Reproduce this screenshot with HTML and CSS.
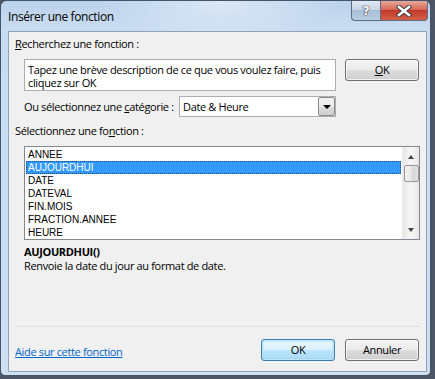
FILE: index.html
```html
<!DOCTYPE html>
<html lang="fr">
  <head>
    <meta charset="UTF-8" />
    <title>Insérer une fonction</title>
    <link rel="stylesheet" href="styles.css">
  </head>
  <body>
    <div class="window">
      <div class="titlebar">
        <div class="title">Insérer une fonction</div>
        <div class="caption-buttons">
          <div class="cap-btn cap-help">?</div>
          <div class="cap-btn cap-close">
            <svg width="16" height="12" viewBox="0 0 16 12">
              <path d="M3 2 L13 10 M13 2 L3 10" stroke="#3b3b3b" stroke-width="4.4" stroke-linecap="square" fill="none" />
              <path d="M3 2 L13 10 M13 2 L3 10" stroke="#ffffff" stroke-width="2.6" stroke-linecap="square" fill="none" />
            </svg>
          </div>
        </div>
      </div>

      <div class="client">
        <div class="label"><u>R</u>echerchez une fonction :</div>

        <div class="search-row">
          <div class="search-box">Tapez une brève description de ce que vous voulez faire, puis cliquez sur OK</div>
          <div class="btn"><u>O</u>K</div>
        </div>

        <div class="category-row">
          <div class="category-label">Ou sélectionnez une <u>c</u>atégorie :</div>
          <div class="select">
            <span class="select-value">Date &amp; Heure</span>
            <span class="select-arrow"><span class="tri-down"></span></span>
          </div>
        </div>

        <div class="label label-list">Sélectionnez une fo<u>n</u>ction :</div>

        <div class="listbox">
          <ul class="items">
            <li>ANNEE</li>
            <li class="selected">AUJOURDHUI</li>
            <li>DATE</li>
            <li>DATEVAL</li>
            <li>FIN.MOIS</li>
            <li>FRACTION.ANNEE</li>
            <li>HEURE</li>
          </ul>
          <div class="scrollbar">
            <span class="arrow-up"></span>
            <span class="thumb"></span>
            <span class="arrow-down"></span>
          </div>
        </div>

        <div class="fn-name">AUJOURDHUI()</div>
        <div class="fn-desc">Renvoie la date du jour au format de date.</div>

        <div class="separator"></div>

        <div class="footer">
          <a class="help-link" href="#">Aide sur cette fonction</a>
          <div class="footer-buttons">
            <div class="btn btn-default">OK</div>
            <div class="btn">Annuler</div>
          </div>
        </div>
      </div>
    </div>
  </body>
</html>
```

FILE: styles.css
```css
* {
  box-sizing: border-box;
}

body {
  margin: 0;
  width: 435px;
  height: 379px;
  overflow: hidden;
  background: #4b5563;
  font-family: "Open Sans", "Noto Sans", sans-serif;
  font-size: 11px;
  letter-spacing: -0.35px;
  color: #000;
}

.window {
  width: 431px;
  height: 376px;
  border: 1px solid #44556a;
  border-radius: 7px 7px 5px 5px;
  background: linear-gradient(to bottom, #bed5ee 0px, #c9dcf0 30px, #cddff1 100%);
  position: relative;
  overflow: hidden;
}

.titlebar {
  height: 30px;
  display: flex;
  align-items: flex-start;
  padding-left: 7px;
  background:
    radial-gradient(ellipse 120px 40px at 220px 0px, rgba(255, 255, 255, 0.45), rgba(255, 255, 255, 0) 100%),
    linear-gradient(to bottom, #bcd3ec, #cadcf0);
}

.title {
  margin-top: 8px;
  font-size: 12px;
  line-height: 16px;
  letter-spacing: -0.4px;
  color: #000;
}

.caption-buttons {
  margin-left: auto;
  margin-right: 2px;
  display: flex;
  height: 20px;
}

.cap-btn {
  height: 20px;
  border: 1px solid #5b6b80;
  border-top: none;
  display: flex;
  align-items: center;
  justify-content: center;
}

.cap-help {
  width: 29px;
  border-radius: 0 0 0 4px;
  border-right: none;
  background: linear-gradient(to bottom, #dfe8f2 0%, #c8d6e6 45%, #a9bdd4 50%, #b9cce0 100%);
  color: #fff;
  font-family: "DejaVu Sans", sans-serif;
  font-size: 13px;
  font-weight: bold;
  letter-spacing: 0;
  text-shadow: 0 0 1px #333, 0 0 1px #333, 0 0 1px #333;
}

.cap-close {
  width: 48px;
  border-radius: 0 0 4px 0;
  background: linear-gradient(to bottom, #e8a79a 0%, #d86a5a 45%, #c23a28 50%, #d4604a 100%);
}

.client {
  margin-left: 7px;
  width: 419px;
  height: 341px;
  border: 1px solid #8ea4bb;
  background: #f0f0f0;
  padding: 5px 6px 10px 6px;
  display: flex;
  flex-direction: column;
}

.label {
  line-height: 14px;
}

.label-list {
  margin-top: 7px;
}

.search-row {
  margin-top: 8px;
  margin-left: 9px;
  display: flex;
  align-items: flex-start;
  gap: 9px;
}

.search-box {
  width: 312px;
  height: 32px;
  border: 1px solid #abadb3;
  background: #fff;
  padding: 3px 2px 0 3px;
  line-height: 13px;
}

.btn {
  width: 74px;
  height: 22px;
  border: 1px solid #707070;
  border-radius: 3px;
  background: linear-gradient(to bottom, #f2f2f2 0%, #ebebeb 50%, #dddddd 51%, #cfcfcf 100%);
  box-shadow: inset 0 0 0 1px rgba(255, 255, 255, 0.7);
  display: flex;
  align-items: center;
  justify-content: center;
  line-height: 14px;
}

.btn-default {
  border-color: #3c7fb1;
  background: linear-gradient(to bottom, #eaf6fd 0%, #d9f0fc 50%, #bee6fd 51%, #a7d9f5 100%);
  box-shadow: inset 0 0 0 1px #bfe5f8, inset 0 0 2px 1px #8fd0f0;
}

.category-row {
  margin-top: 5px;
  margin-left: 9px;
  width: 312px;
  height: 21px;
  display: flex;
  align-items: center;
}

.category-label {
  flex: 1;
  line-height: 14px;
  white-space: nowrap;
}

.select {
  width: 157px;
  height: 21px;
  border: 1px solid #abadb3;
  background: #fff;
  display: flex;
  align-items: center;
  padding-left: 3px;
}

.select-value {
  flex: 1;
  line-height: 14px;
}

.select-arrow {
  width: 17px;
  height: 19px;
  border: 1px solid #8b8b8b;
  border-radius: 2px;
  background: linear-gradient(to bottom, #f2f2f2 0%, #ebebeb 50%, #dddddd 51%, #cfcfcf 100%);
  display: flex;
  align-items: center;
  justify-content: center;
}

.tri-down {
  width: 0;
  height: 0;
  border-left: 4px solid transparent;
  border-right: 4px solid transparent;
  border-top: 4px solid #000;
}

.listbox {
  margin-top: 8px;
  margin-left: 9px;
  height: 94px;
  border: 1px solid #828790;
  background: #fff;
  display: flex;
}

.items {
  list-style: none;
  margin: 0;
  padding: 1px;
  flex: 1;
  font-family: "Liberation Sans", Arial, sans-serif;
  font-size: 10px;
  letter-spacing: 0;
}

.items li {
  height: 13px;
  line-height: 13px;
  padding-left: 2px;
}

.items li.selected {
  background: #3399ff;
  color: #fff;
  outline: 1px dotted #1a4d80;
  outline-offset: -1px;
}

.scrollbar {
  width: 17px;
  background: linear-gradient(to right, #e6e6e6, #f4f4f4 40%, #f4f4f4 60%, #e6e6e6);
  border-left: 1px solid #ededed;
  display: flex;
  flex-direction: column;
  align-items: center;
}

.arrow-up {
  margin-top: 8px;
  width: 0;
  height: 0;
  border-left: 3px solid transparent;
  border-right: 3px solid transparent;
  border-bottom: 4px solid #444;
}

.thumb {
  margin-top: 6px;
  width: 15px;
  height: 17px;
  border: 1px solid #979797;
  border-radius: 2px;
  background: linear-gradient(to right, #f3f3f3, #e8e8e8 50%, #d6d6d6 51%, #e0e0e0);
}

.arrow-down {
  margin-top: auto;
  margin-bottom: 7px;
  width: 0;
  height: 0;
  border-left: 3px solid transparent;
  border-right: 3px solid transparent;
  border-top: 4px solid #444;
}

.fn-name {
  margin-top: 5px;
  margin-left: 9px;
  font-weight: bold;
  line-height: 14px;
}

.fn-desc {
  margin-left: 9px;
  line-height: 14px;
}

.separator {
  margin-top: auto;
  height: 1px;
  background: #d8dfe6;
}

.footer {
  margin-top: 12px;
  display: flex;
  align-items: center;
  height: 22px;
}

.help-link {
  color: #0066cc;
  text-decoration: underline;
  line-height: 14px;
  margin-top: 4px;
}

.footer-buttons {
  margin-left: auto;
  display: flex;
  gap: 10px;
  margin-right: 1px;
}
```
